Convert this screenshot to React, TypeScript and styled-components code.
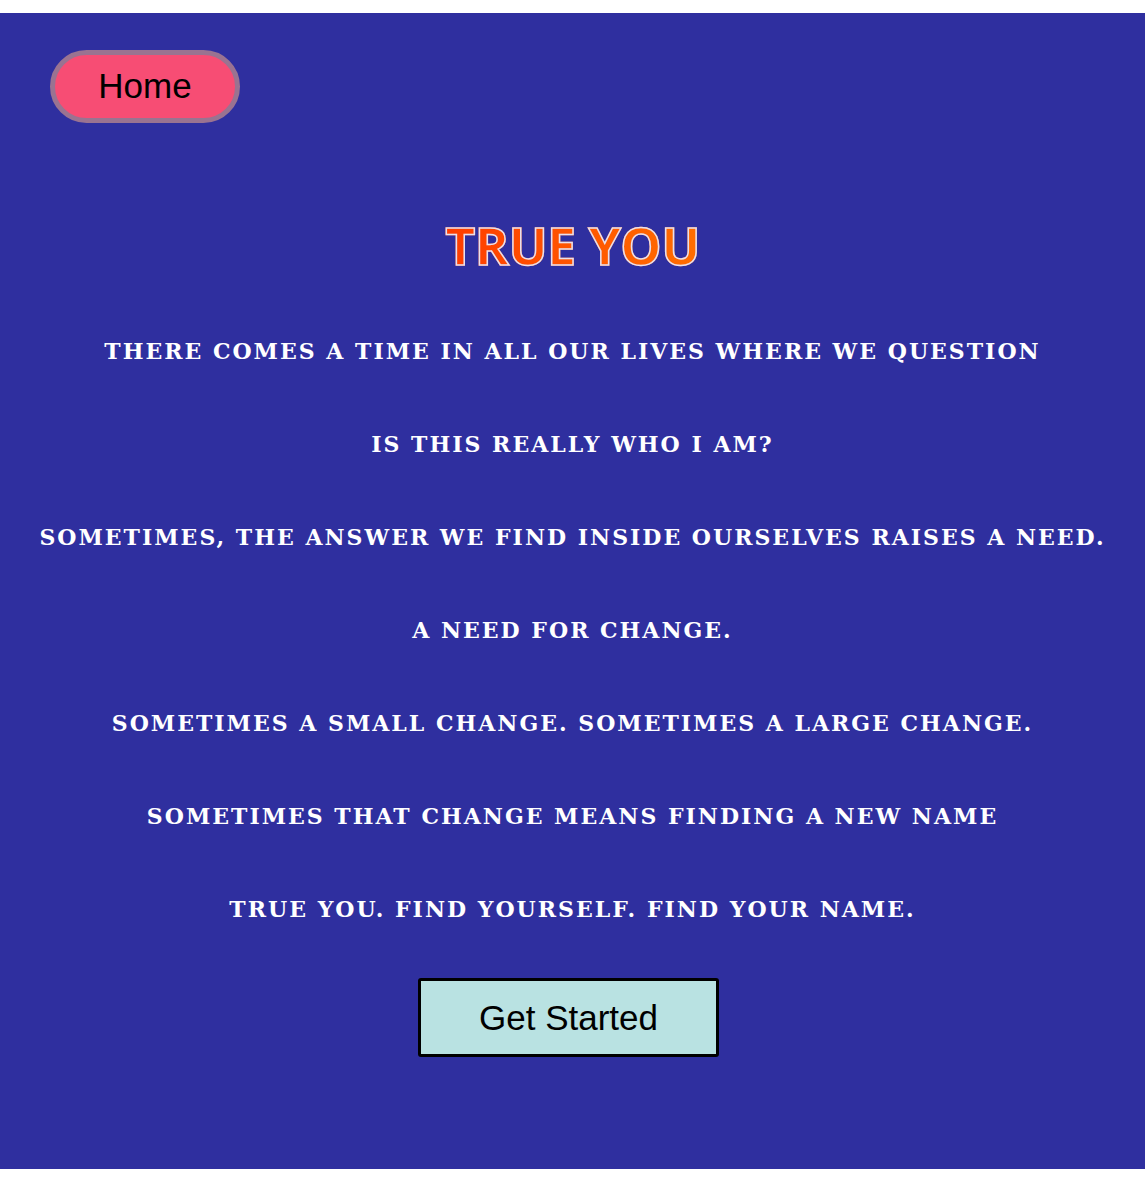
import React from 'react';
import styled, { createGlobalStyle } from 'styled-components';

const GlobalStyle = createGlobalStyle`
  html, body {
    margin: 0;
    padding: 0;
    background: #ffffff;
  }
  body {
    padding: 13px 0;
  }
`;

const Page = styled.div`
  background-color: #2f2f9f;
  min-height: 1156px;
  box-sizing: border-box;
  padding: 37px 50px 0 50px;
  display: flex;
  flex-direction: column;
`;

const HomeButton = styled.button`
  align-self: flex-start;
  width: 190px;
  height: 73px;
  border-radius: 37px;
  border: 5px solid #9a7391;
  background-color: #f74d74;
  color: #000;
  font-family: 'Liberation Sans', Arial, sans-serif;
  font-size: 35px;
  padding: 0 0 2px 0;
  cursor: pointer;
`;

const Title = styled.h1`
  margin: 92px 0 0 0;
  text-align: center;
  font-family: 'Open Sans', sans-serif;
  font-weight: 700;
  font-size: 52px;
  line-height: 60px;
  letter-spacing: -0.6px;
  background: linear-gradient(90deg, #ff3c00, #ff6e00);
  -webkit-background-clip: text;
  background-clip: text;
  color: transparent;
  -webkit-text-stroke: 1.5px #e8e0ee;
  align-self: center;
`;

const Lines = styled.div`
  margin-top: 30px;
  display: flex;
  flex-direction: column;
  margin-left: -50px;
  margin-right: -50px;
`;

const Line = styled.p`
  margin: 0;
  height: 93px;
  line-height: 93px;
  text-align: center;
  color: #ffffff;
  font-family: 'DejaVu Serif', serif;
  font-weight: 700;
  font-size: 22px;
  letter-spacing: 2px;
  text-transform: uppercase;
  white-space: nowrap;
`;

const StartButton = styled.button`
  align-self: center;
  margin: 22px 8px 0 0;
  width: 301px;
  height: 79px;
  background-color: #b9e2e2;
  border: 3px solid #000;
  border-radius: 3px;
  color: #000;
  font-family: 'Liberation Sans', Arial, sans-serif;
  font-size: 35px;
  cursor: pointer;
`;

const lines = [
  'There comes a time in all our lives where we question',
  'Is this really who I am?',
  'Sometimes, the answer we find inside ourselves raises a need.',
  'A need for change.',
  'Sometimes a small change. Sometimes a large change.',
  'Sometimes that change means finding a new name',
  'True You. Find yourself. Find your name.',
];

const App: React.FC = () => {
  return (
    <>
      <GlobalStyle />
      <Page>
        <HomeButton>Home</HomeButton>
        <Title>TRUE YOU</Title>
        <Lines>
          {lines.map((text, index) => (
            <Line key={index}>{text}</Line>
          ))}
        </Lines>
        <StartButton>Get Started</StartButton>
      </Page>
    </>
  );
};

export default App;
